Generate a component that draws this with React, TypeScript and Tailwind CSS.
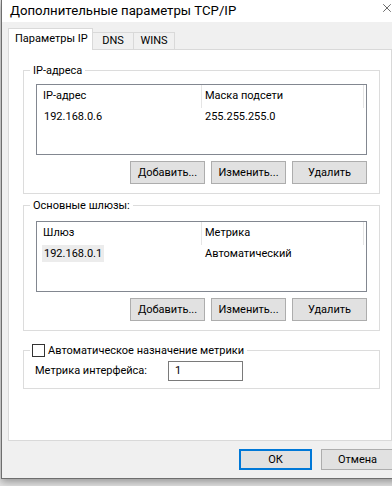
import { X } from 'lucide-react';

interface Column {
  title: string;
  value: string;
}

const Btn = ({ label, w = 'w-[75px]' }: { label: string; w?: string }) => (
  <button className={`${w} h-[23px] bg-[#e1e1e1] border border-[#adadad] text-[11px] leading-none text-black`}>
    {label}
  </button>
);

const ListView = ({ cols, selected }: { cols: Column[]; selected?: boolean }) => (
  <div className="h-[71px] border border-[#828790] bg-white">
    <div className="flex h-[23px]">
      <div className="w-[165px] border-r border-[#e5e5e5] pl-[6px] flex items-center">{cols[0].title}</div>
      <div className="w-[162px] border-r border-[#e5e5e5] pl-[3px] flex items-center">{cols[1].title}</div>
    </div>
    <div className="flex h-[18px] items-center">
      <div className="w-[165px] pl-[5px]">
        <span className={`px-[2px] py-[2px] ${selected ? 'bg-[#ececec]' : ''}`}>{cols[0].value}</span>
      </div>
      <div className="pl-[3px]">{cols[1].value}</div>
    </div>
  </div>
);

const Group = ({
  legend,
  children,
  className = '',
}: {
  legend: React.ReactNode;
  children: React.ReactNode;
  className?: string;
}) => (
  <fieldset className={`w-[357px] border border-[#dcdcdc] ${className}`}>
    <legend className="ml-[6px] px-[3px] leading-[15px]">{legend}</legend>
    {children}
  </fieldset>
);

const ButtonRow = () => (
  <div className="flex justify-end gap-[6px] mt-[6px]">
    <Btn label="Добавить..." />
    <Btn label="Изменить..." />
    <Btn label="Удалить" />
  </div>
);

export default function App() {
  return (
    <div className="w-[392px] h-[486px] overflow-hidden bg-[#e4e4e4] font-['Roboto',sans-serif] text-[11px] text-black whitespace-nowrap">
      <div className="w-[410px] h-[479px] ml-px flex flex-col border-l border-b border-[#6e6e6e] bg-[#f0f0f0] shadow-[0_3px_8px_rgba(0,0,0,0.35)]">
        {/* title bar */}
        <div className="h-[22px] bg-white flex items-center pl-[8px] relative">
          <span className="text-[13.2px]">Дополнительные параметры TCP/IP</span>
          <X className="absolute left-[378px] top-[1px] w-[14px] h-[14px]" strokeWidth={1} />
        </div>

        {/* tabs */}
        <div className="pl-[6px] pt-[6px] flex items-end h-[27px]">
          <div className="w-[85px] h-[22px] -mb-px relative z-10 bg-white border border-b-0 border-[#d9d9d9] flex items-center pl-[6px]">
            Параметры IP
          </div>
          <div className="w-[41px] h-[17px] border-t border-r border-[#d9d9d9] flex items-center justify-center">DNS</div>
          <div className="w-[41px] h-[17px] border-t border-r border-[#d9d9d9] flex items-center justify-center">WINS</div>
        </div>

        <div className="ml-[6px] w-[384px] h-[392px] bg-white border border-[#d9d9d9] pl-[14px] pt-[13px]">
          <Group legend="IP-адреса" className="pb-[9px]">
            <div className="px-[12px] mt-[6px]">
              <ListView
                cols={[
                  { title: 'IP-адрес', value: '192.168.0.6' },
                  { title: 'Маска подсети', value: '255.255.255.0' },
                ]}
              />
              <ButtonRow />
            </div>
          </Group>

          <Group legend="Основные шлюзы:" className="mt-[4px] pb-[9px]">
            <div className="px-[12px] mt-[8px]">
              <ListView
                selected
                cols={[
                  { title: 'Шлюз', value: '192.168.0.1' },
                  { title: 'Метрика', value: 'Автоматический' },
                ]}
              />
              <ButtonRow />
            </div>
          </Group>

          <Group
            className="mt-[12px] pb-[7px]"
            legend={
              <span className="flex items-center gap-[3px] -ml-[1px]">
                <span className="w-[13px] h-[13px] border border-[#333] bg-white" />
                Автоматическое назначение метрики
              </span>
            }
          >
            <div className="flex items-center pl-[11px] mt-[3px]">
              <span className="w-[133px]">Метрика интерфейса:</span>
              <div className="w-[75px] h-[20px] border border-[#7a7a7a] flex items-center pl-[6px]">1</div>
            </div>
          </Group>
        </div>

        <div className="flex gap-[9px] pl-[237px] mt-[8px]">
          <button className="w-[73px] h-[21px] bg-[#e1e1e1] border-2 border-[#0078d7] text-[11px] leading-none">ОК</button>
          <button className="w-[73px] h-[21px] bg-[#e1e1e1] border border-[#adadad] text-[11px] leading-none">Отмена</button>
        </div>
      </div>
    </div>
  );
}
